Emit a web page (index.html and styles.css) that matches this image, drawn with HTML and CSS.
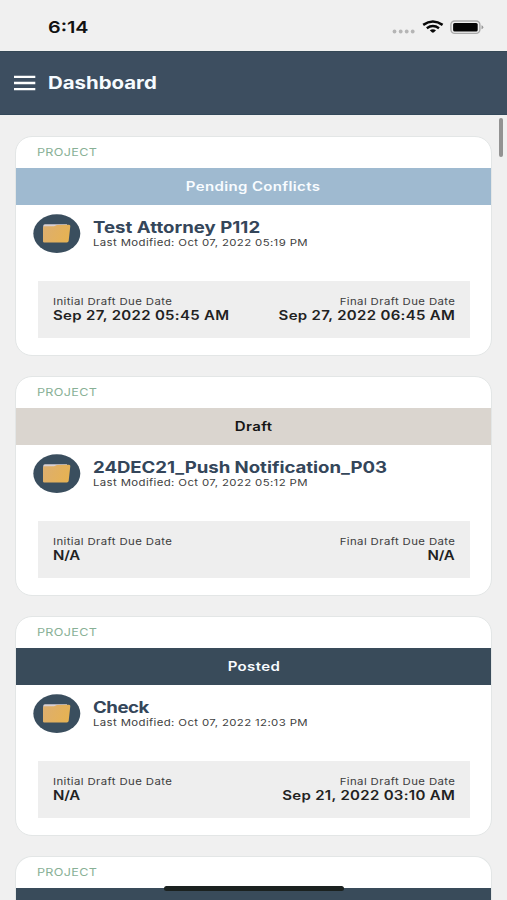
FILE: index.html
```
<!DOCTYPE html>
<html lang="en">
<head>
<meta charset="utf-8">
<title>Dashboard</title>
<link rel="stylesheet" href="styles.css">
</head>
<body>
<svg class="defs" width="0" height="0" aria-hidden="true">
  <linearGradient id="gold" x1="0" y1="0" x2="1" y2="0.3">
    <stop offset="0" stop-color="#dcae70"/>
    <stop offset="1" stop-color="#e6b254"/>
  </linearGradient>
  <symbol id="folder" viewBox="0 0 48 40">
    <ellipse cx="23.800" cy="19.600" rx="23.500" ry="19.400" fill="#3a4e5e"/>
    <path d="M10.300 11.800q0-1.500 1.500-1.500H34V17H10.300z" fill="#d8d0d3"/>
    <path d="M10 27.500V13.500q0-1.200 1.500-1.200H21l3-1.200 12-.4q1.500 0 1.300 1.500L35.700 26.800q-.2 1.700-1.900 1.700H11.200q-1.200 0-1.200-1z" fill="url(#gold)"/>
  </symbol>
</svg>
<header class="status">
  <span class="t time">6:14</span>
  <svg class="signals" width="94" height="18" viewBox="0 0 94 18">
    <g fill="#b5b5b5"><circle cx="4.500" cy="12.500" r="1.900"/><circle cx="10.700" cy="12.500" r="1.900"/><circle cx="16.700" cy="12.500" r="1.900"/><circle cx="22.700" cy="12.500" r="1.900"/></g>
    <g fill="none" stroke="#080808" stroke-width="2.500">
      <path d="M33.200 5.900Q42.900-.8 52.600 5.900"/>
      <path d="M36.800 9.200Q42.900 4.900 49 9.200"/>
    </g>
    <path d="M39.800 11.300Q42.900 9.300 46 11.300L44 13.300Q42.900 14.200 41.800 13.300z" fill="#080808"/>
    <rect x="60.900" y="2" width="29" height="12.400" rx="3.800" fill="none" stroke="#aaa" stroke-width="1.400"/>
    <rect x="63.100" y="3.900" width="24.600" height="8.600" rx="1.600" fill="#050505"/>
    <path d="M91.500 6.200q1.800.5 1.800 2t-1.800 2z" fill="#999"/>
  </svg>
</header>
<nav class="bar">
  <svg width="22" height="16" viewBox="0 0 22 16"><path d="M0 1.800H21.300M0 8H21.300M0 14.200H21.300" stroke="#fff" stroke-width="2.300"/></svg>
  <h1 class="t heading">Dashboard</h1>
</nav>
<main class="list">
  <article class="card">
    <div class="kind"><span class="t label">PROJECT</span></div>
    <div class="banner pending"><span class="t">Pending Conflicts</span></div>
    <div class="summary">
      <svg class="icon" width="48" height="40"><use href="#folder"/></svg>
      <div class="info"><h2 class="t name">Test Attorney P112</h2><p class="t modified">Last Modified: Oct 07, 2022 05:19 PM</p></div>
    </div>
    <div class="dates">
      <div class="date"><span class="t caption">Initial Draft Due Date</span><strong class="t value">Sep 27, 2022 05:45 AM</strong></div>
      <div class="date end"><span class="t caption">Final Draft Due Date</span><strong class="t value">Sep 27, 2022 06:45 AM</strong></div>
    </div>
  </article>
  <article class="card">
    <div class="kind"><span class="t label">PROJECT</span></div>
    <div class="banner draft"><span class="t">Draft</span></div>
    <div class="summary">
      <svg class="icon" width="48" height="40"><use href="#folder"/></svg>
      <div class="info"><h2 class="t name long">24DEC21_Push Notification_P03</h2><p class="t modified">Last Modified: Oct 07, 2022 05:12 PM</p></div>
    </div>
    <div class="dates">
      <div class="date"><span class="t caption">Initial Draft Due Date</span><strong class="t value brief">N/A</strong></div>
      <div class="date end"><span class="t caption">Final Draft Due Date</span><strong class="t value brief">N/A</strong></div>
    </div>
  </article>
  <article class="card">
    <div class="kind"><span class="t label">PROJECT</span></div>
    <div class="banner posted"><span class="t">Posted</span></div>
    <div class="summary">
      <svg class="icon" width="48" height="40"><use href="#folder"/></svg>
      <div class="info"><h2 class="t name short">Check</h2><p class="t modified">Last Modified: Oct 07, 2022 12:03 PM</p></div>
    </div>
    <div class="dates">
      <div class="date"><span class="t caption">Initial Draft Due Date</span><strong class="t value brief">N/A</strong></div>
      <div class="date end"><span class="t caption">Final Draft Due Date</span><strong class="t value">Sep 21, 2022 03:10 AM</strong></div>
    </div>
  </article>
  <article class="card">
    <div class="kind"><span class="t label">PROJECT</span></div>
    <div class="banner posted"></div>
  </article>
</main>
<div class="scrollbar"></div>
<div class="home"></div>
</body>
</html>
```
FILE: styles.css
```
* { box-sizing: border-box; margin: 0; }
body { width: 507px; height: 900px; overflow: hidden; position: relative; background: #f0f0f0; color: #222; font-family: Inter, "Liberation Sans", sans-serif; }
.defs { position: absolute; }
.t { display: block; width: max-content; white-space: nowrap; transform: scaleX(1.2); transform-origin: left center; }
.status { height: 51px; display: flex; justify-content: space-between; padding: 17px 23px 0 48px; }
.time { font-size: 16.500px; line-height: 21px; font-weight: 600; color: #111; }
.signals { margin-top: 2px; }
.bar { height: 64px; display: flex; align-items: center; gap: 12px; padding-left: 14px; background: #3d4e60; border-top: 1px solid #354856; border-bottom: 1px solid #33485a; color: #f6fbff; }
.heading { font-size: 17px; line-height: 22px; font-weight: 700; }
.list { height: 785px; overflow: hidden; display: flex; flex-direction: column; gap: 20px; padding: 21px 15px 0; }
.card { flex: none; height: 220px; background: #fff; border: 1px solid #e3e6e6; border-radius: 17px; overflow: hidden; }
.card:last-child { height: 44px; border-bottom: 0; border-radius: 17px 17px 0 0; }
.kind { height: 31px; padding: 8px 0 0 21px; }
.label { font-size: 10.500px; line-height: 16px; color: #88b096; letter-spacing: .27px; }
.banner { height: 37px; display: flex; align-items: center; justify-content: center; font-size: 12.500px; line-height: 18px; font-weight: 600; letter-spacing: .3px; padding-top: 1px; }
.banner .t { transform-origin: center; }
.pending { background: #9fbad0; color: #f8fcff; }
.draft { background: #dad5cf; color: #151515; }
.posted { background: #394b5a; color: #f8fcff; }
.summary { height: 76px; display: flex; padding: 9px 0 0 17px; }
.icon { flex: none; }
.info { padding: 5px 0 0 12px; }
.name { font-size: 15.500px; line-height: 18px; font-weight: 650; color: #34465a; letter-spacing: .02px; }
.long { letter-spacing: -.03px; }
.short { letter-spacing: -.4px; }
.modified { font-size: 9.500px; line-height: 12px; color: #414141; letter-spacing: .31px; }
.dates { height: 57px; margin: 0 21px 0 22px; padding: 14px 15px 0; display: flex; justify-content: space-between; background: #eee; }
.caption { font-size: 9.500px; line-height: 13px; color: #3d3d3d; letter-spacing: .32px; }
.value { font-size: 12.500px; line-height: 16px; font-weight: 600; color: #222; letter-spacing: .26px; }
.brief { letter-spacing: -.15px; }
.end { display: flex; flex-direction: column; align-items: flex-end; }
.end .t { transform-origin: right center; }
.scrollbar { position: absolute; left: 499px; top: 118px; width: 4px; height: 39px; border-radius: 2px; background: #929292; }
.home { position: absolute; left: 164px; top: 886px; width: 180px; height: 5px; border-radius: 3px; background: #1b211f; }
```
